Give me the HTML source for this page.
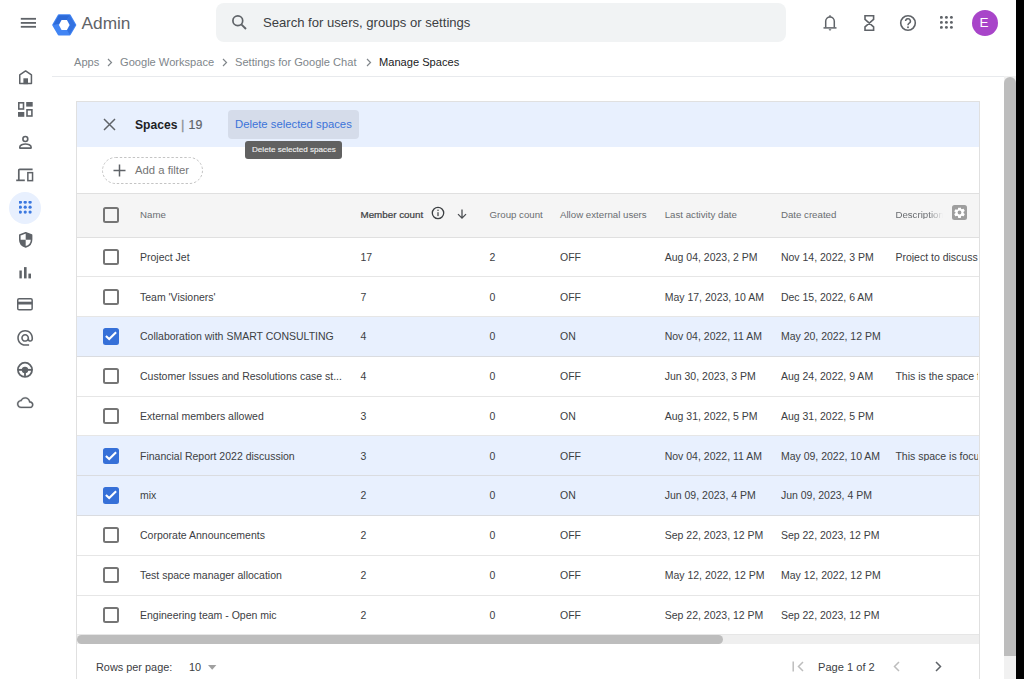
<!DOCTYPE html>
<html><head><meta charset="utf-8">
<style>
*{box-sizing:border-box;margin:0;padding:0}
html,body{width:1024px;height:679px;overflow:hidden;background:#fff;font-family:"Liberation Sans",sans-serif;color:#3c4043}
.a{position:absolute}
.ic{position:absolute;display:block}
.t{position:absolute;white-space:nowrap;line-height:1}
#hdr .t{font-size:9.7px}
.hd{color:#6a6d71}
.row{position:absolute;left:77px;width:902px;border-bottom:1px solid #e6e6e6}
.row.sel{background:#e8f0fe;border-bottom-color:#dadce0}
.cell{position:absolute;white-space:nowrap;line-height:1;font-size:10.5px;color:#3c4043}
.cb{position:absolute;left:25.8px;width:16.2px;height:16.2px;border:2px solid #757575;border-radius:2.5px}
.cb.on{background:#3670d8;border-color:#3670d8}
</style></head>
<body>
<!-- top bar -->
<svg class="ic" style="left:20px;top:17px" width="17" height="11" viewBox="0 0 17 11"><rect x="0.8" y="0.9" width="15.2" height="1.8" fill="#5f6368"/><rect x="0.8" y="5" width="15.2" height="1.8" fill="#5f6368"/><rect x="0.8" y="8.9" width="15.2" height="1.8" fill="#5f6368"/></svg>
<svg class="ic" style="left:52px;top:13.5px" width="25" height="22" viewBox="0 0 25 22">
<polygon points="6.8,1.2 17.7,1.2 23.3,11 17.7,20.6 6.8,20.6 1.2,11" fill="#4285f4" stroke="#4285f4" stroke-width="2" stroke-linejoin="round"/>
<polygon points="6.8,1.2 17.7,1.2 14.9,6 9.6,6 7.5,9.8 1.2,11" fill="#2d6ad8" stroke="#2d6ad8" stroke-width="0" />
<polygon points="17.7,1.2 23.3,11 17.7,20.6 14.9,16 17.6,11 14.9,6" fill="#3372e0"/>
<polygon points="9.6,6 14.9,6 17.6,11 14.9,16 9.6,16 6.9,11" fill="#fff"/>
</svg>
<div class="t" style="left:81.5px;top:14.5px;font-size:17.3px;color:#5f6368">Admin</div>
<div class="a" style="left:216px;top:3.2px;width:570px;height:39.3px;background:#f1f3f4;border-radius:8px"></div>
<svg class="ic" style="left:231px;top:14px" width="17" height="17" viewBox="0 0 17 17"><circle cx="6.8" cy="6.8" r="4.9" fill="none" stroke="#5f6368" stroke-width="1.7"/><line x1="10.3" y1="10.3" x2="15" y2="15" stroke="#5f6368" stroke-width="1.9"/></svg>
<div class="t" style="left:263px;top:16px;font-size:13.1px;color:#3c4043">Search for users, groups or settings</div>
<!-- right icons -->
<svg class="ic" style="left:822px;top:14px" width="16" height="18" viewBox="0 0 16 18"><path d="M3.7 13.6V7.3a4.3 4.3 0 0 1 8.6 0V13.6" fill="none" stroke="#5f6368" stroke-width="1.5"/><path d="M1.5 13.9H14.5" stroke="#5f6368" stroke-width="1.5"/><rect x="7.3" y="1.2" width="1.4" height="1.8" fill="#5f6368"/><path d="M6.7 15.3h2.6a1.3 1.3 0 0 1-2.6 0z" fill="#5f6368"/></svg>
<svg class="ic" style="left:863.5px;top:15px" width="11" height="16" viewBox="0 0 11 16"><path d="M1 0.8H9.6V4.3L1 11.9V15.3H9.6V11.9L1 4.3Z" fill="none" stroke="#5f6368" stroke-width="1.6" stroke-linejoin="miter"/></svg>
<svg class="ic" style="left:899px;top:14px" width="18" height="18" viewBox="0 0 18 18"><circle cx="9" cy="9" r="7.3" fill="none" stroke="#5f6368" stroke-width="1.6"/><path d="M6.6 7.1a2.4 2.4 0 1 1 3.4 2.2c-.7.4-1 .8-1 1.6v.4" fill="none" stroke="#5f6368" stroke-width="1.5"/><circle cx="9" cy="13.2" r="0.95" fill="#5f6368"/></svg>
<svg class="ic" style="left:939.5px;top:16px" width="13" height="13" viewBox="0 0 13 13" fill="#5f6368"><circle cx="1.4" cy="1.4" r="1.45"/><circle cx="1.4" cy="6.4" r="1.45"/><circle cx="1.4" cy="11.4" r="1.45"/><circle cx="6.4" cy="1.4" r="1.45"/><circle cx="6.4" cy="6.4" r="1.45"/><circle cx="6.4" cy="11.4" r="1.45"/><circle cx="11.4" cy="1.4" r="1.45"/><circle cx="11.4" cy="6.4" r="1.45"/><circle cx="11.4" cy="11.4" r="1.45"/></svg>
<div class="a" style="left:972px;top:9.5px;width:26px;height:26px;border-radius:50%;background:#a845c9"></div>
<div class="t" style="left:979.5px;top:15.5px;font-size:13.5px;color:#fff">E</div>

<!-- breadcrumb -->
<div class="t" style="left:74px;top:57px;font-size:11.1px;color:#80868b">Apps</div>
<div class="t" style="left:120px;top:57px;font-size:11.1px;color:#80868b">Google Workspace</div>
<div class="t" style="left:235px;top:57px;font-size:11.1px;color:#80868b">Settings for Google Chat</div>
<div class="t" style="left:379px;top:57px;font-size:11.1px;color:#202124">Manage Spaces</div>
<svg class="ic" style="left:106px;top:58px" width="8" height="9" viewBox="0 0 8 9"><path d="M2 1l3.5 3.5L2 8" fill="none" stroke="#80868b" stroke-width="1.2"/></svg>
<svg class="ic" style="left:221px;top:58px" width="8" height="9" viewBox="0 0 8 9"><path d="M2 1l3.5 3.5L2 8" fill="none" stroke="#80868b" stroke-width="1.2"/></svg>
<svg class="ic" style="left:365px;top:58px" width="8" height="9" viewBox="0 0 8 9"><path d="M2 1l3.5 3.5L2 8" fill="none" stroke="#80868b" stroke-width="1.2"/></svg>
<div class="a" style="left:52px;top:76px;width:953px;height:1px;background:#e8eaed"></div>

<!-- sidebar -->
<div class="a" style="left:8.6px;top:192px;width:32px;height:32px;border-radius:50%;background:#e8f0fe"></div>
<svg class="ic" style="left:18.8px;top:69.7px;overflow:visible" width="13.2" height="14.2" viewBox="0 0 13.2 14.2"><path d="M0.75 13.45V4.9L6.6 0.9l5.85 4V13.45z" fill="none" stroke="#5f6368" stroke-width="1.5" stroke-linejoin="round"/><rect x="4.4" y="8.3" width="4.6" height="5.9" fill="#5f6368"/></svg>
<svg class="ic" style="left:18px;top:102px;overflow:visible" width="15" height="15" viewBox="0 0 15 15"><rect x="0.8" y="0.8" width="4.7" height="6.2" fill="none" stroke="#5f6368" stroke-width="1.6"/><rect x="8.2" y="0" width="6.5" height="4.6" fill="#5f6368"/><rect x="0" y="10" width="6.3" height="4.8" fill="#5f6368"/><rect x="9" y="7.8" width="4.9" height="6.2" fill="none" stroke="#5f6368" stroke-width="1.6"/></svg>
<svg class="ic" style="left:18.9px;top:135.7px;overflow:visible" width="12.9" height="13" viewBox="0 0 12.9 13"><circle cx="6.35" cy="3" r="2.45" fill="none" stroke="#5f6368" stroke-width="1.6"/><path d="M0.8 12.1V11.1C0.8 9.2 4 8 6.45 8S12.1 9.2 12.1 11.1V12.1z" fill="none" stroke="#5f6368" stroke-width="1.6" stroke-linejoin="round"/></svg>
<svg class="ic" style="left:16px;top:167.5px;overflow:visible" width="18" height="14" viewBox="0 0 18 14"><path d="M2.8 12V2.2q0-0.9 0.9-0.9H16.6" fill="none" stroke="#5f6368" stroke-width="1.7"/><rect x="0.2" y="11.5" width="8.6" height="1.7" fill="#5f6368"/><rect x="11.85" y="4.65" width="4.7" height="8" fill="none" stroke="#5f6368" stroke-width="1.5"/></svg>
<svg class="ic" style="left:18.7px;top:231.8px;overflow:visible" width="13.4" height="15.7" viewBox="0 0 13.4 15.7"><path d="M6.7 0.8L12.6 3V7.5C12.6 11 10.2 14 6.7 14.9 3.2 14 0.8 11 0.8 7.5V3z" fill="none" stroke="#5f6368" stroke-width="1.6" stroke-linejoin="round"/><path d="M6.7 0.8L12.6 3V7.7H6.7z" fill="#5f6368"/><path d="M6.7 7.7H0.8C0.8 11 3.2 14 6.7 14.9z" fill="#5f6368"/></svg>
<svg class="ic" style="left:19px;top:266.5px;overflow:visible" width="12.5" height="11.5" viewBox="0 0 12.5 11.5"><rect x="0.4" y="3.5" width="2.4" height="7.9" fill="#5f6368"/><rect x="5" y="0.1" width="2.6" height="11.3" fill="#5f6368"/><rect x="9.4" y="6.6" width="2.6" height="4.8" fill="#5f6368"/></svg>
<svg class="ic" style="left:17.2px;top:298.3px;overflow:visible" width="15.9" height="12.5" viewBox="0 0 15.9 12.5"><rect x="0.75" y="0.75" width="14.4" height="11" rx="1.3" fill="none" stroke="#5f6368" stroke-width="1.5"/><rect x="0.75" y="3.7" width="14.4" height="2.8" fill="#5f6368"/></svg>
<svg class="ic" style="left:17.1px;top:329.5px;overflow:visible" width="16.3" height="15.8" viewBox="2 2 20 20"><path fill="#5f6368" d="M12 2C6.48 2 2 6.48 2 12s4.48 10 10 10h5v-2h-5c-4.34 0-8-3.66-8-8s3.66-8 8-8 8 3.66 8 8v1.43c0 .79-.71 1.57-1.5 1.57s-1.5-.78-1.5-1.57V12c0-2.76-2.24-5-5-5s-5 2.24-5 5 2.24 5 5 5c1.38 0 2.64-.56 3.54-1.47.65.89 1.77 1.47 2.96 1.47 1.97 0 3.5-1.6 3.5-3.57V12c0-5.52-4.48-10-10-10zm0 13c-1.66 0-3-1.34-3-3s1.34-3 3-3 3 1.34 3 3-1.34 3-3 3z"/></svg>
<svg class="ic" style="left:17.2px;top:362px;overflow:visible" width="16" height="15.6" viewBox="0 0 16 15.6"><circle cx="8" cy="7.8" r="7.1" fill="none" stroke="#5f6368" stroke-width="1.8"/><rect x="1" y="6.9" width="14" height="1.9" fill="#5f6368"/><circle cx="8" cy="7.9" r="3.2" fill="#5f6368"/><rect x="7.1" y="8" width="1.8" height="7" fill="#5f6368"/></svg>
<svg class="ic" style="left:17.1px;top:396.7px;overflow:visible" width="16.4" height="11.3" viewBox="0 4 24 16"><path fill="#5f6368" stroke="#5f6368" stroke-width="0.35" d="M19.35 10.04C18.67 6.59 15.64 4 12 4 9.11 4 6.6 5.64 5.35 8.04 2.34 8.36 0 10.91 0 14c0 3.31 2.69 6 6 6h13c2.76 0 5-2.24 5-5 0-2.64-2.05-4.78-4.65-4.96zM19 18H6c-2.21 0-4-1.79-4-4 0-2.05 1.53-3.76 3.56-3.970l1.07-.11.5-.95C8.08 7.14 9.94 6 12 6c2.62 0 4.88 1.86 5.39 4.43l.3 1.5 1.53.11c1.56.1 2.78 1.41 2.78 2.96 0 1.650-1.350 3-3 3z"/></svg>
<svg class="ic" style="left:19px;top:201px" width="13" height="13" viewBox="0 0 13 13"><circle cx="1.35" cy="1.20" r="1.6" fill="#3b78e0"/><circle cx="1.35" cy="6.15" r="1.6" fill="#3b78e0"/><circle cx="1.35" cy="11.10" r="1.6" fill="#3b78e0"/><circle cx="6.22" cy="1.20" r="1.6" fill="#3b78e0"/><circle cx="6.22" cy="6.15" r="1.6" fill="#3b78e0"/><circle cx="6.22" cy="11.10" r="1.6" fill="#3b78e0"/><circle cx="11.09" cy="1.20" r="1.6" fill="#3b78e0"/><circle cx="11.09" cy="6.15" r="1.6" fill="#3b78e0"/><circle cx="11.09" cy="11.10" r="1.6" fill="#3b78e0"/></svg>

<!-- card -->
<div class="a" style="left:76px;top:101px;width:904px;height:600px;border:1px solid #e0e0e0;background:#fff"></div>
<div class="a" style="left:77px;top:102px;width:902px;height:45px;background:#e8f0fe"></div>
<svg class="ic" style="left:103px;top:118px" width="13" height="13" viewBox="0 0 13 13"><path d="M1 1l11 11M12 1L1 12" stroke="#5f6368" stroke-width="1.45"/></svg>
<div class="t" style="left:135px;top:119px;font-size:12.1px;font-weight:bold;color:#202124">Spaces</div>
<div class="t" style="left:181px;top:118px;font-size:13px;color:#8d9196;-webkit-text-stroke:0.3px #8d9196">|</div><div class="t" style="left:188.5px;top:119.2px;font-size:12.4px;color:#5f6368;-webkit-text-stroke:0.2px #5f6368">19</div>
<div class="a" style="left:228px;top:110px;width:131px;height:29px;background:#d5dcea;border-radius:4px"></div>
<div class="t" style="left:235px;top:119px;font-size:11.3px;color:#3b73d9">Delete selected spaces</div>
<div class="a" style="left:245px;top:140.5px;width:97px;height:18.5px;background:#616161;border-radius:3px"></div>
<div class="t" style="left:252px;top:146px;font-size:8.1px;-webkit-text-stroke:0.12px #f1f1f1;color:#f1f1f1">Delete selected spaces</div>

<svg class="ic" style="left:102px;top:157px" width="101" height="27" viewBox="0 0 101 27"><rect x="0.5" y="0.5" width="100" height="26" rx="13" fill="none" stroke="#c4c4c4" stroke-width="1" stroke-dasharray="2.4 1.9"/></svg>
<svg class="ic" style="left:113px;top:164px" width="13" height="13" viewBox="0 0 13 13"><path d="M6.5 0.5v12M0.5 6.5h12" stroke="#5f6368" stroke-width="1.5"/></svg>
<div class="t" style="left:135px;top:165px;font-size:11.3px;color:#757575">Add a filter</div>

<!-- table header -->
<div id="hdr" class="a" style="left:77px;top:192.5px;width:902px;height:45px;background:#f5f5f5;border-top:1px solid #e0e0e0;border-bottom:1px solid #e0e0e0"><div class="cb" style="top:13.8px"></div>
<div class="t hd" style="left:63.0px;top:16px">Name</div>
<div class="t" style="left:283.5px;top:16.8px;font-size:9.8px;-webkit-text-stroke:0.22px #3c4043;color:#3c4043">Member count</div>
<div class="t hd" style="left:412.5px;top:16px">Group count</div>
<div class="t hd" style="left:483.0px;top:16px">Allow external users</div>
<div class="t hd" style="left:587.7px;top:16px">Last activity date</div>
<div class="t hd" style="left:703.9px;top:16px">Date created</div>
<div class="t hd" style="left:818.4px;top:16px;width:48px;overflow:hidden;-webkit-mask-image:linear-gradient(90deg,#000 70%,transparent 100%)">Description</div>
<svg class="ic" style="left:354px;top:12.5px" width="14" height="14" viewBox="0 0 14 14"><circle cx="7" cy="7" r="5.7" fill="none" stroke="#3c4043" stroke-width="1.3"/><rect x="6.4" y="6.2" width="1.2" height="3.9" fill="#3c4043"/><circle cx="7" cy="4.3" r="0.75" fill="#3c4043"/></svg>
<svg class="ic" style="left:380px;top:15.5px" width="10" height="11" viewBox="0 0 10 11"><path d="M5 0.5V9M1 5.1l4 4 4-4" fill="none" stroke="#4a4d51" stroke-width="1.3"/></svg>
<div class="a" style="left:875px;top:11.5px;width:15px;height:15px;background:#9e9e9e;border-radius:2.5px"></div>
<svg class="ic" style="left:876px;top:12.2px" width="13" height="13" viewBox="0 0 24 24"><path fill="#fff" d="M19.4 13c.04-.32.06-.66.06-1s-.02-.68-.07-1l2.1-1.65c.2-.15.24-.42.12-.64l-2-3.46c-.12-.22-.39-.3-.61-.22l-2.49 1c-.52-.4-1.08-.73-1.69-.98l-.38-2.65A.49.49 0 0 0 14 3h-4c-.25 0-.46.18-.49.42l-.38 2.65c-.61.25-1.17.59-1.69.98l-2.49-1a.5.5 0 0 0-.61.22l-2 3.46c-.13.22-.07.49.12.64L4.57 11c-.04.32-.07.66-.07 1s.02.68.07 1l-2.11 1.65c-.19.15-.24.42-.12.64l2 3.46c.12.22.39.3.61.22l2.49-1c.52.4 1.08.73 1.69.98l.38 2.65c.03.24.24.42.49.42h4c.25 0 .46-.18.49-.42l.38-2.65c.61-.25 1.17-.59 1.69-.98l2.49 1c.23.09.49 0 .61-.22l2-3.46c.12-.22.07-.49-.12-.64L19.4 13zM12 15.5A3.5 3.5 0 1 1 12 8.5a3.5 3.5 0 0 1 0 7z"/></svg></div>
<div class="row" style="top:237.50px;height:39.78px">
<div class="cb" style="top:11.3px"></div>
<div class="cell" style="left:63.0px;top:14.3px">Project Jet</div>
<div class="cell" style="left:283.5px;top:14.3px">17</div>
<div class="cell" style="left:412.5px;top:14.3px">2</div>
<div class="cell" style="left:483.0px;top:14.3px">OFF</div>
<div class="cell" style="left:587.7px;top:14.3px">Aug 04, 2023, 2 PM</div>
<div class="cell" style="left:703.9px;top:14.3px">Nov 14, 2022, 3 PM</div>
<div class="cell" style="left:818.4px;top:14.3px;width:83px;overflow:hidden">Project to discuss</div>
</div>
<div class="row" style="top:277.28px;height:39.78px">
<div class="cb" style="top:11.3px"></div>
<div class="cell" style="left:63.0px;top:14.3px">Team 'Visioners'</div>
<div class="cell" style="left:283.5px;top:14.3px">7</div>
<div class="cell" style="left:412.5px;top:14.3px">0</div>
<div class="cell" style="left:483.0px;top:14.3px">OFF</div>
<div class="cell" style="left:587.7px;top:14.3px">May 17, 2023, 10 AM</div>
<div class="cell" style="left:703.9px;top:14.3px">Dec 15, 2022, 6 AM</div>
</div>
<div class="row sel" style="top:317.06px;height:39.78px">
<div class="cb on" style="top:11.3px"><svg width="16" height="16" viewBox="0 0 16 16" style="position:absolute;left:-2px;top:-2px"><path d="M2.9 7.9L6.2 11.1L13.1 4.3" fill="none" stroke="#fff" stroke-width="2.1"/></svg></div>
<div class="cell" style="left:63.0px;top:14.3px">Collaboration with SMART CONSULTING</div>
<div class="cell" style="left:283.5px;top:14.3px">4</div>
<div class="cell" style="left:412.5px;top:14.3px">0</div>
<div class="cell" style="left:483.0px;top:14.3px">ON</div>
<div class="cell" style="left:587.7px;top:14.3px">Nov 04, 2022, 11 AM</div>
<div class="cell" style="left:703.9px;top:14.3px">May 20, 2022, 12 PM</div>
</div>
<div class="row" style="top:356.84px;height:39.78px">
<div class="cb" style="top:11.3px"></div>
<div class="cell" style="left:63.0px;top:14.3px">Customer Issues and Resolutions case st...</div>
<div class="cell" style="left:283.5px;top:14.3px">4</div>
<div class="cell" style="left:412.5px;top:14.3px">0</div>
<div class="cell" style="left:483.0px;top:14.3px">OFF</div>
<div class="cell" style="left:587.7px;top:14.3px">Jun 30, 2023, 3 PM</div>
<div class="cell" style="left:703.9px;top:14.3px">Aug 24, 2022, 9 AM</div>
<div class="cell" style="left:818.4px;top:14.3px;width:83px;overflow:hidden">This is the space f</div>
</div>
<div class="row" style="top:396.62px;height:39.78px">
<div class="cb" style="top:11.3px"></div>
<div class="cell" style="left:63.0px;top:14.3px">External members allowed</div>
<div class="cell" style="left:283.5px;top:14.3px">3</div>
<div class="cell" style="left:412.5px;top:14.3px">0</div>
<div class="cell" style="left:483.0px;top:14.3px">ON</div>
<div class="cell" style="left:587.7px;top:14.3px">Aug 31, 2022, 5 PM</div>
<div class="cell" style="left:703.9px;top:14.3px">Aug 31, 2022, 5 PM</div>
</div>
<div class="row sel" style="top:436.40px;height:39.78px">
<div class="cb on" style="top:11.3px"><svg width="16" height="16" viewBox="0 0 16 16" style="position:absolute;left:-2px;top:-2px"><path d="M2.9 7.9L6.2 11.1L13.1 4.3" fill="none" stroke="#fff" stroke-width="2.1"/></svg></div>
<div class="cell" style="left:63.0px;top:14.3px">Financial Report 2022 discussion</div>
<div class="cell" style="left:283.5px;top:14.3px">3</div>
<div class="cell" style="left:412.5px;top:14.3px">0</div>
<div class="cell" style="left:483.0px;top:14.3px">OFF</div>
<div class="cell" style="left:587.7px;top:14.3px">Nov 04, 2022, 11 AM</div>
<div class="cell" style="left:703.9px;top:14.3px">May 09, 2022, 10 AM</div>
<div class="cell" style="left:818.4px;top:14.3px;width:83px;overflow:hidden">This space is focu</div>
</div>
<div class="row sel" style="top:476.18px;height:39.78px">
<div class="cb on" style="top:11.3px"><svg width="16" height="16" viewBox="0 0 16 16" style="position:absolute;left:-2px;top:-2px"><path d="M2.9 7.9L6.2 11.1L13.1 4.3" fill="none" stroke="#fff" stroke-width="2.1"/></svg></div>
<div class="cell" style="left:63.0px;top:14.3px">mix</div>
<div class="cell" style="left:283.5px;top:14.3px">2</div>
<div class="cell" style="left:412.5px;top:14.3px">0</div>
<div class="cell" style="left:483.0px;top:14.3px">ON</div>
<div class="cell" style="left:587.7px;top:14.3px">Jun 09, 2023, 4 PM</div>
<div class="cell" style="left:703.9px;top:14.3px">Jun 09, 2023, 4 PM</div>
</div>
<div class="row" style="top:515.96px;height:39.78px">
<div class="cb" style="top:11.3px"></div>
<div class="cell" style="left:63.0px;top:14.3px">Corporate Announcements</div>
<div class="cell" style="left:283.5px;top:14.3px">2</div>
<div class="cell" style="left:412.5px;top:14.3px">0</div>
<div class="cell" style="left:483.0px;top:14.3px">OFF</div>
<div class="cell" style="left:587.7px;top:14.3px">Sep 22, 2023, 12 PM</div>
<div class="cell" style="left:703.9px;top:14.3px">Sep 22, 2023, 12 PM</div>
</div>
<div class="row" style="top:555.74px;height:39.78px">
<div class="cb" style="top:11.3px"></div>
<div class="cell" style="left:63.0px;top:14.3px">Test space manager allocation</div>
<div class="cell" style="left:283.5px;top:14.3px">2</div>
<div class="cell" style="left:412.5px;top:14.3px">0</div>
<div class="cell" style="left:483.0px;top:14.3px">OFF</div>
<div class="cell" style="left:587.7px;top:14.3px">May 12, 2022, 12 PM</div>
<div class="cell" style="left:703.9px;top:14.3px">May 12, 2022, 12 PM</div>
</div>
<div class="row" style="top:595.52px;height:39.78px">
<div class="cb" style="top:11.3px"></div>
<div class="cell" style="left:63.0px;top:14.3px">Engineering team - Open mic</div>
<div class="cell" style="left:283.5px;top:14.3px">2</div>
<div class="cell" style="left:412.5px;top:14.3px">0</div>
<div class="cell" style="left:483.0px;top:14.3px">OFF</div>
<div class="cell" style="left:587.7px;top:14.3px">Sep 22, 2023, 12 PM</div>
<div class="cell" style="left:703.9px;top:14.3px">Sep 22, 2023, 12 PM</div>
</div>

<!-- horizontal scrollbar -->
<div class="a" style="left:77px;top:635px;width:902px;height:9px;background:#efefef"></div>
<div class="a" style="left:77px;top:635px;width:646px;height:9px;background:#bdbdbd;border-radius:5px"></div>

<!-- pagination -->
<div class="t" style="left:96px;top:661.5px;font-size:10.9px;color:#3c4043">Rows per page:</div>
<div class="t" style="left:189px;top:661.5px;font-size:10.9px;color:#3c4043">10</div>
<svg class="ic" style="left:207.8px;top:664.5px" width="9" height="5" viewBox="0 0 9 5"><path d="M0 0h8.4L4.2 4.7z" fill="#a0a0a0"/></svg>
<svg class="ic" style="left:792px;top:661px" width="13" height="11" viewBox="0 0 13 11"><path d="M1.2 0.5v10" stroke="#bdbdbd" stroke-width="1.5"/><path d="M11 1L6.5 5.5 11 10" fill="none" stroke="#bdbdbd" stroke-width="1.5"/></svg>
<div class="t" style="left:818px;top:661.5px;font-size:11.1px;color:#3c4043">Page 1 of 2</div>
<svg class="ic" style="left:892px;top:661px" width="9" height="11" viewBox="0 0 9 11"><path d="M7 1L2.5 5.5 7 10" fill="none" stroke="#bdbdbd" stroke-width="1.5"/></svg>
<svg class="ic" style="left:934px;top:661px" width="9" height="11" viewBox="0 0 9 11"><path d="M2 1l4.5 4.5L2 10" fill="none" stroke="#5f6368" stroke-width="1.5"/></svg>

<!-- vertical scrollbar -->
<div class="a" style="left:1004px;top:76px;width:12px;height:603px;background:#f1f1f1"></div>
<div class="a" style="left:1004px;top:77px;width:12px;height:579px;background:#bdbdbd;border-radius:6px 6px 0 0"></div>
<div class="a" style="left:1016px;top:0;width:8px;height:679px;background:#000"></div>
</body></html>
